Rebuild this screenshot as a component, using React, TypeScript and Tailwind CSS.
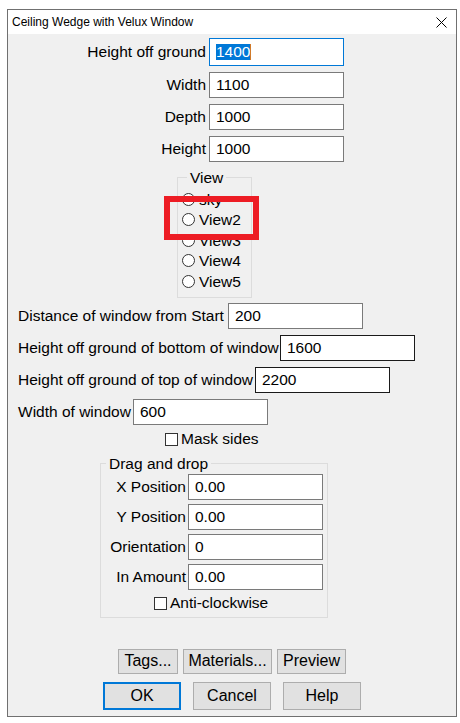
const field = "flex items-center h-[26px] w-[135px] border border-[#7a7a7a] bg-white pl-[6px]";

function Box({ value, dark }: { value: string; dark?: boolean }) {
  return (
    <div className={dark ? field.replace("border-[#7a7a7a]", "border-[#1a1a1a]") : field}>
      {value}
    </div>
  );
}

function Radio({ label, checked }: { label: string; checked?: boolean }) {
  return (
    <div className="flex h-[20.5px] items-center">
      <span className="flex h-[13px] w-[13px] items-center justify-center rounded-full border border-[#333] bg-white">
        {checked && <span className="h-[5px] w-[5px] rounded-full bg-[#333]" />}
      </span>
      <span className="ml-[4px]">{label}</span>
    </div>
  );
}

function Check({ label }: { label: string }) {
  return (
    <div className="flex h-[17px] items-center">
      <span className="h-[13px] w-[13px] border border-[#333] bg-white" />
      <span className="ml-[3px]">{label}</span>
    </div>
  );
}

function Btn({ label, w, h, primary }: { label: string; w: string; h: string; primary?: boolean }) {
  return (
    <button
      className={`${w} ${h} flex items-center justify-center bg-[#e1e1e1] text-[16px] ${
        primary ? "border-2 border-[#0078d7]" : "border border-[#adadad]"
      }`}
    >
      {label}
    </button>
  );
}

export default function App() {
  const top = [
    ["Height off ground", "1400"],
    ["Width", "1100"],
    ["Depth", "1000"],
    ["Height", "1000"],
  ];
  const mid: [string, string, string, boolean][] = [
    ["Distance of window from Start", "200", "w-[210px]", false],
    ["Height off ground of bottom of window", "1600", "w-[262px]", true],
    ["Height off ground of top of window", "2200", "w-[237px]", true],
    ["Width of window", "600", "w-[115px]", false],
  ];
  const drag = [
    ["X Position", "0.00"],
    ["Y Position", "0.00"],
    ["Orientation", "0"],
    ["In Amount", "0.00"],
  ];

  return (
    <div className="relative h-[723px] w-[460px] overflow-hidden bg-white pt-[9px] pl-[7px] font-['Liberation_Sans',Arial,sans-serif] text-[15.5px] text-black">
      <div className="flex h-[708px] w-[450px] flex-col border border-[#707070]">
        {/* title bar */}
        <div className="flex h-[24px] shrink-0 items-center justify-between bg-white pl-[4px] pr-[9px] text-[12px]">
          <span>Ceiling Wedge with Velux Window</span>
          <svg width="11" height="11" viewBox="0 0 11 11" className="mt-[1px]">
            <path d="M0.5 0.5 L10.5 10.5 M10.5 0.5 L0.5 10.5" stroke="#000" strokeWidth="1" />
          </svg>
        </div>

        <div className="flex flex-1 flex-col bg-[#f0f0f0]">
          {/* top fields */}
          <div className="mt-[4px] flex flex-col">
            {top.map(([l, v], i) => (
              <div key={l} className={`flex items-center ${i ? "mt-[6px]" : ""}`}>
                <span className="w-[198px] text-right">{l}</span>
                {i === 0 ? (
                  <div className="ml-[3px] flex h-[28px] w-[135px] items-center border border-[#0078d7] bg-white pl-[6px]">
                    <span className="bg-[#0078d7] leading-[16px] text-white">1400</span>
                    <span className="h-[16px] w-px bg-[#d07a2a]" />
                  </div>
                ) : (
                  <div className="ml-[3px]">
                    <Box value={v} />
                  </div>
                )}
              </div>
            ))}
          </div>

          {/* view group */}
          <fieldset className="mt-[7px] ml-[169px] w-[75px] border border-[#dcdcdc] pt-[3px] pb-[5px] pl-[4px]">
            <legend className="ml-[5px] px-[3px] leading-[17px]">View</legend>
            <Radio label="sky" checked />
            <Radio label="View2" />
            <Radio label="View3" />
            <Radio label="View4" />
            <Radio label="View5" />
          </fieldset>

          {/* middle fields */}
          <div className="mt-[5px] flex flex-col pl-[10px]">
            {mid.map(([l, v, w, d], i) => (
              <div key={l} className={`flex items-center ${i ? "mt-[6px]" : ""}`}>
                <span className={`${w} whitespace-nowrap`}>{l}</span>
                <Box value={v} dark={d} />
              </div>
            ))}
          </div>

          <div className="mt-[6px] ml-[157px]">
            <Check label="Mask sides" />
          </div>

          {/* drag and drop group */}
          <fieldset className="mt-[7px] ml-[92px] w-[228px] border border-[#dcdcdc] pt-[2px] pb-[5px]">
            <legend className="ml-[5px] px-[3px] leading-[17px]">Drag and drop</legend>
            {drag.map(([l, v], i) => (
              <div key={l} className={`flex items-center ${i ? "mt-[4px]" : ""}`}>
                <span className="w-[85px] whitespace-nowrap text-right">{l}</span>
                <div className="ml-[2px]">
                  <Box value={v} />
                </div>
              </div>
            ))}
            <div className="mt-[5px] ml-[53px]">
              <Check label="Anti-clockwise" />
            </div>
          </fieldset>

          {/* buttons */}
          <div className="mt-[31px] ml-[110px] flex gap-[5px]">
            <Btn label="Tags..." w="w-[60px]" h="h-[25px]" />
            <Btn label="Materials..." w="w-[89px]" h="h-[25px]" />
            <Btn label="Preview" w="w-[69px]" h="h-[25px]" />
          </div>
          <div className="mt-[8px] ml-[95px] flex gap-[12px]">
            <Btn label="OK" w="w-[78px]" h="h-[28px]" primary />
            <Btn label="Cancel" w="w-[78px]" h="h-[28px]" />
            <Btn label="Help" w="w-[78px]" h="h-[28px]" />
          </div>
        </div>
      </div>

      {/* annotation */}
      <div className="absolute top-[196px] left-[164px] h-[44px] w-[95px] border-[6px] border-[#ed1c24]" />
    </div>
  );
}
